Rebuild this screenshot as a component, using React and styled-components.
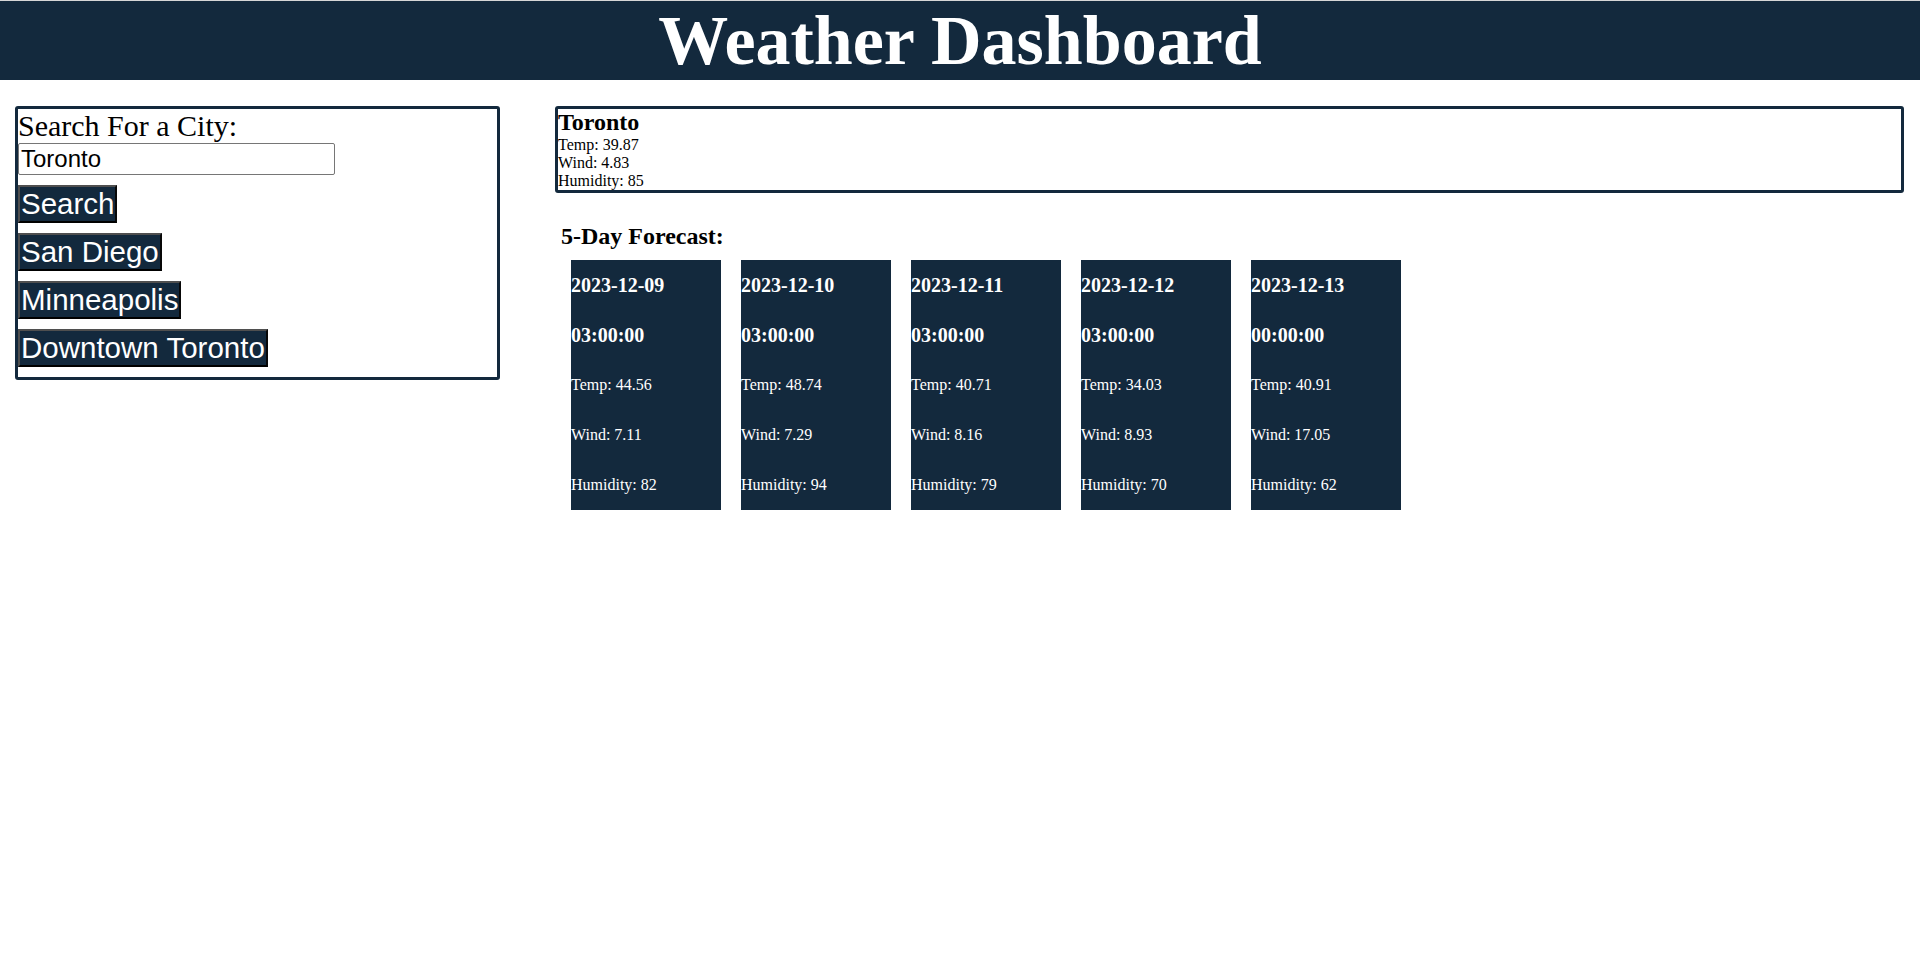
import React from 'react';
import styled, { createGlobalStyle } from 'styled-components';

const navy = '#13293d';

const GlobalStyle = createGlobalStyle`
  body {
    margin: 0;
    background: #fff;
    font-family: "Liberation Serif", "Times New Roman", serif;
    color: #000;
  }
`;

const Header = styled.header`
  border-top: 1px solid #d6d6d6;
  background-color: ${navy};
  text-align: center;
`;

const Title = styled.h1`
  margin: 0;
  color: #fff;
  font-size: 70px;
  font-weight: bold;
  line-height: 79px;
`;

const Main = styled.main`
  display: flex;
  align-items: flex-start;
  padding: 26px 16px 0 15px;
`;

const SearchBox = styled.section`
  box-sizing: border-box;
  width: 485px;
  flex-shrink: 0;
  margin-right: 55px;
  border: 3px solid ${navy};
  border-radius: 3px;
  padding-bottom: 10px;
  display: flex;
  flex-direction: column;
  align-items: flex-start;
`;

const Label = styled.label`
  font-size: 30px;
  line-height: normal;
`;

const Input = styled.input`
  box-sizing: border-box;
  width: 317px;
  height: 32px;
  margin: 0;
  padding: 1px 2px;
  border: 1px solid #767676;
  border-radius: 2px;
  font-family: "Liberation Sans", Arial, sans-serif;
  font-size: 24px;
  color: #000;
`;

const Button = styled.button`
  margin: 10px 0 0;
  padding: 0 1px;
  background-color: ${navy};
  color: #fff;
  border: 2px solid;
  border-color: #4f4f4f #080808 #000 #4f4f4f;
  font-family: "Liberation Sans", Arial, sans-serif;
  font-size: 29.5px;
  line-height: normal;
  cursor: pointer;
`;

const Results = styled.div`
  flex: 1;
  min-width: 0;
`;

const Current = styled.section`
  border: 3px solid ${navy};
  border-radius: 3px;
  font-size: 16px;
`;

const CityName = styled.h2`
  margin: 0;
  font-size: 24px;
  line-height: normal;
  font-weight: bold;
`;

const Stat = styled.div`
  line-height: normal;
`;

const ForecastTitle = styled.h2`
  margin: 30px 0 10px 6px;
  font-size: 24px;
  font-weight: bold;
  line-height: normal;
`;

const Cards = styled.div`
  display: flex;
  gap: 20px;
  padding-left: 16px;
`;

const Card = styled.article`
  width: 150px;
  background-color: ${navy};
  color: #fff;
`;

const Row = styled.div`
  height: 50px;
  line-height: 50px;
  font-size: ${({ $bold }) => ($bold ? '20px' : '16px')};
  font-weight: ${({ $bold }) => ($bold ? 'bold' : 'normal')};
  white-space: nowrap;
`;

const history = ['San Diego', 'Minneapolis', 'Downtown Toronto'];

const forecast = [
  { date: '2023-12-09', time: '03:00:00', temp: '44.56', wind: '7.11', humidity: 82 },
  { date: '2023-12-10', time: '03:00:00', temp: '48.74', wind: '7.29', humidity: 94 },
  { date: '2023-12-11', time: '03:00:00', temp: '40.71', wind: '8.16', humidity: 79 },
  { date: '2023-12-12', time: '03:00:00', temp: '34.03', wind: '8.93', humidity: 70 },
  { date: '2023-12-13', time: '00:00:00', temp: '40.91', wind: '17.05', humidity: 62 },
];

const App = () => {
  return (
    <>
      <GlobalStyle />
      <Header>
        <Title>Weather Dashboard</Title>
      </Header>
      <Main>
        <SearchBox>
          <Label htmlFor="city">Search For a City:</Label>
          <Input id="city" defaultValue="Toronto" />
          <Button>Search</Button>
          {history.map((city) => (
            <Button key={city}>{city}</Button>
          ))}
        </SearchBox>
        <Results>
          <Current>
            <CityName>Toronto</CityName>
            <Stat>Temp: 39.87</Stat>
            <Stat>Wind: 4.83</Stat>
            <Stat>Humidity: 85</Stat>
          </Current>
          <ForecastTitle>5-Day Forecast:</ForecastTitle>
          <Cards>
            {forecast.map((day) => (
              <Card key={day.date}>
                <Row $bold>{day.date}</Row>
                <Row $bold>{day.time}</Row>
                <Row>Temp: {day.temp}</Row>
                <Row>Wind: {day.wind}</Row>
                <Row>Humidity: {day.humidity}</Row>
              </Card>
            ))}
          </Cards>
        </Results>
      </Main>
    </>
  );
};

export default App;
